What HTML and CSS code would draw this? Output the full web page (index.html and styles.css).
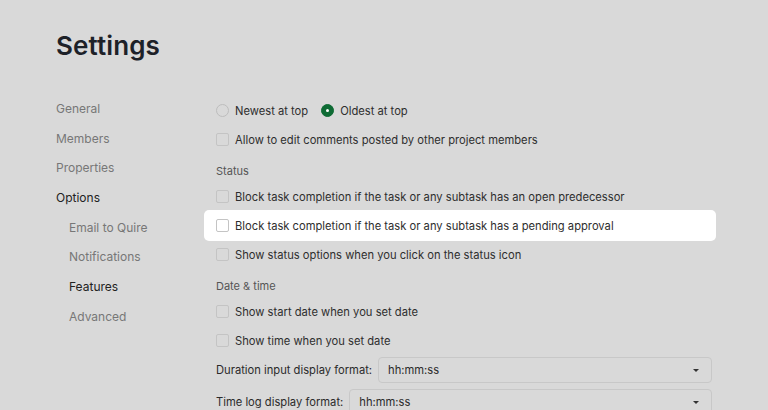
FILE: index.html
```html
<!DOCTYPE html>
<html lang="en">
<head>
  <meta charset="UTF-8" />
  <title>Settings</title>
  <link rel="stylesheet" href="styles.css">
</head>
<body>
  <div class="page">
    <h1 class="title">Settings</h1>
    <div class="layout">
      <nav class="nav">
        <div class="nav-item">General</div>
        <div class="nav-item">Members</div>
        <div class="nav-item">Properties</div>
        <div class="nav-item active">Options</div>
        <div class="nav-item sub">Email to Quire</div>
        <div class="nav-item sub">Notifications</div>
        <div class="nav-item sub active">Features</div>
        <div class="nav-item sub">Advanced</div>
      </nav>

      <div class="content">
        <div class="row">
          <label class="radio"><span class="radio-dot"></span>Newest at top</label>
          <label class="radio"><span class="radio-dot checked"></span>Oldest at top</label>
        </div>
        <div class="row">
          <span class="box"></span>Allow to edit comments posted by other project members
        </div>

        <div class="section">Status</div>
        <div class="row">
          <span class="box"></span>Block task completion if the task or any subtask has an open predecessor
        </div>
        <div class="row highlight">
          <span class="box"></span>Block task completion if the task or any subtask has a pending approval
        </div>
        <div class="row">
          <span class="box"></span>Show status options when you click on the status icon
        </div>

        <div class="section">Date &amp; time</div>
        <div class="row">
          <span class="box"></span>Show start date when you set date
        </div>
        <div class="row">
          <span class="box"></span>Show time when you set date
        </div>
        <div class="field">
          <span class="field-label">Duration input display format:</span>
          <div class="select">hh:mm:ss<span class="caret"></span></div>
        </div>
        <div class="field">
          <span class="field-label">Time log display format:</span>
          <div class="select">hh:mm:ss<span class="caret"></span></div>
        </div>
      </div>
    </div>
  </div>
</body>
</html>
```

FILE: styles.css
```css
body {
  margin: 0;
  background-color: #d9d9d9;
  font-family: Inter, 'Noto Sans', sans-serif;
  color: #2b2b2b;
  overflow: hidden;
}
.page {
  padding: 30px 0 0 56px;
}
.title {
  margin: 0;
  font-size: 26px;
  font-weight: 600;
  line-height: 32px;
  color: #1d2128;
  letter-spacing: 0.1px;
}
.layout {
  display: flex;
  margin-top: 32px;
}
.nav {
  width: 148px;
  display: flex;
  flex-direction: column;
}
.nav-item {
  height: 29.7px;
  line-height: 29.7px;
  font-size: 12px;
  color: #777;
}
.nav-item.sub {
  padding-left: 13px;
}
.nav-item.active {
  color: #222;
}
.content {
  width: 512px;
  font-size: 11.2px;
  margin-top: 2px;
}
.row {
  display: flex;
  align-items: center;
  height: 29px;
  padding: 0 12px;
  color: #2e2e2e;
}
.row.highlight {
  background-color: #fff;
  border-radius: 5px;
  height: 31px;
  margin: -1px 0;
}
.radio {
  display: flex;
  align-items: center;
  margin-right: 13px;
}
.radio-dot {
  width: 11px;
  height: 11px;
  border: 1px solid #bdbdbd;
  border-radius: 50%;
  margin-right: 6px;
  box-sizing: content-box;
}
.radio-dot.checked {
  background-color: #0e6b34;
  border-color: #0e6b34;
  position: relative;
}
.radio-dot.checked::after {
  content: "";
  position: absolute;
  left: 4px;
  top: 4px;
  width: 3px;
  height: 3px;
  border-radius: 50%;
  background-color: #fff;
}
.box {
  width: 11px;
  height: 11px;
  border: 1px solid #c4c4c4;
  border-radius: 2px;
  margin-right: 6px;
  flex-shrink: 0;
}
.section {
  height: 21px;
  line-height: 21px;
  margin-top: 7px;
  padding: 0 12px;
  color: #555;
  font-size: 11px;
}
.field {
  display: flex;
  align-items: center;
  padding: 0 4px 0 12px;
  margin-top: 2px;
  height: 26px;
}
.field + .field {
  margin-top: 6px;
}
.field-label {
  margin-right: 6px;
  white-space: nowrap;
}
.select {
  flex: 1;
  height: 26px;
  box-sizing: border-box;
  border: 1px solid #c8c8c8;
  border-radius: 4px;
  display: flex;
  align-items: center;
  justify-content: space-between;
  padding: 0 12px 0 9px;
}
.caret {
  width: 0;
  height: 0;
  border-left: 3px solid transparent;
  border-right: 3px solid transparent;
  border-top: 3px solid #333;
}
```
